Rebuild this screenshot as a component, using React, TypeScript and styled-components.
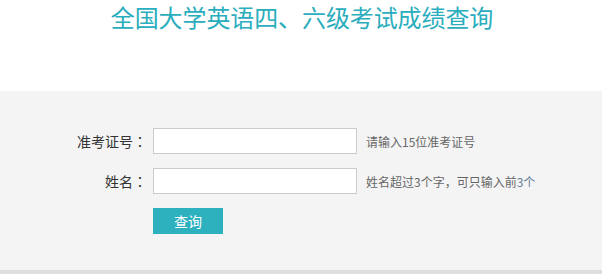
import React from 'react';
import styled, { createGlobalStyle } from 'styled-components';

const GlobalStyle = createGlobalStyle`
  html, body {
    margin: 0;
    padding: 0;
    background: #fff;
    font-family: "Noto Sans CJK SC", "Noto Sans", sans-serif;
  }
`;

const Header = styled.div`
  height: 91px;
  display: flex;
  justify-content: center;
`;

const Title = styled.h1`
  margin: 0;
  padding-left: 2px;
  font-size: 24px;
  line-height: 34px;
  font-weight: normal;
  color: #2aadbd;
  letter-spacing: -0.1px;
`;

const Panel = styled.div`
  background: #f4f4f4;
  border-bottom: 4px solid #dedede;
  padding: 37px 0 36px;
  display: flex;
  flex-direction: column;
  gap: 14px;
`;

const Row = styled.div`
  display: flex;
  align-items: center;
  height: 26px;
`;

const Label = styled.label`
  width: 147px;
  text-align: right;
  font-size: 14px;
  color: #333;
  margin-right: 6px;
`;

/* centred full-width colon, as in the original font */
const Colon = styled.span`
  font-family: "Noto Sans CJK JP", "Noto Sans CJK SC", sans-serif;
`;

const Field = styled.input`
  box-sizing: border-box;
  width: 204px;
  height: 26px;
  border: 1px solid #ccc;
  background: #fff;
  outline: none;
  padding: 0 6px;
  margin: 0;
`;

const Hint = styled.span`
  margin-left: 9px;
  font-size: 12px;
  color: #666;
`;

const Accent = styled.span`
  color: #5f7c9a;
`;

const Submit = styled.button`
  margin-left: 153px;
  width: 70px;
  height: 26px;
  border: none;
  padding: 0;
  background: #2db1bf;
  color: #fff;
  font-family: inherit;
  font-size: 14px;
  cursor: pointer;
`;

const App: React.FC = () => {
  return (
    <>
      <GlobalStyle />
      <Header>
        <Title>全国大学英语四、六级考试成绩查询</Title>
      </Header>
      <Panel>
        <Row>
          <Label>准考证号<Colon>：</Colon></Label>
          <Field />
          <Hint>请输入15位准考证号</Hint>
        </Row>
        <Row>
          <Label>姓名<Colon>：</Colon></Label>
          <Field />
          <Hint>
            姓名超过3个字<Colon>，</Colon>可只输入前<Accent>3个</Accent>
          </Hint>
        </Row>
        <Row>
          <Submit>查询</Submit>
        </Row>
      </Panel>
    </>
  );
};

export default App;
